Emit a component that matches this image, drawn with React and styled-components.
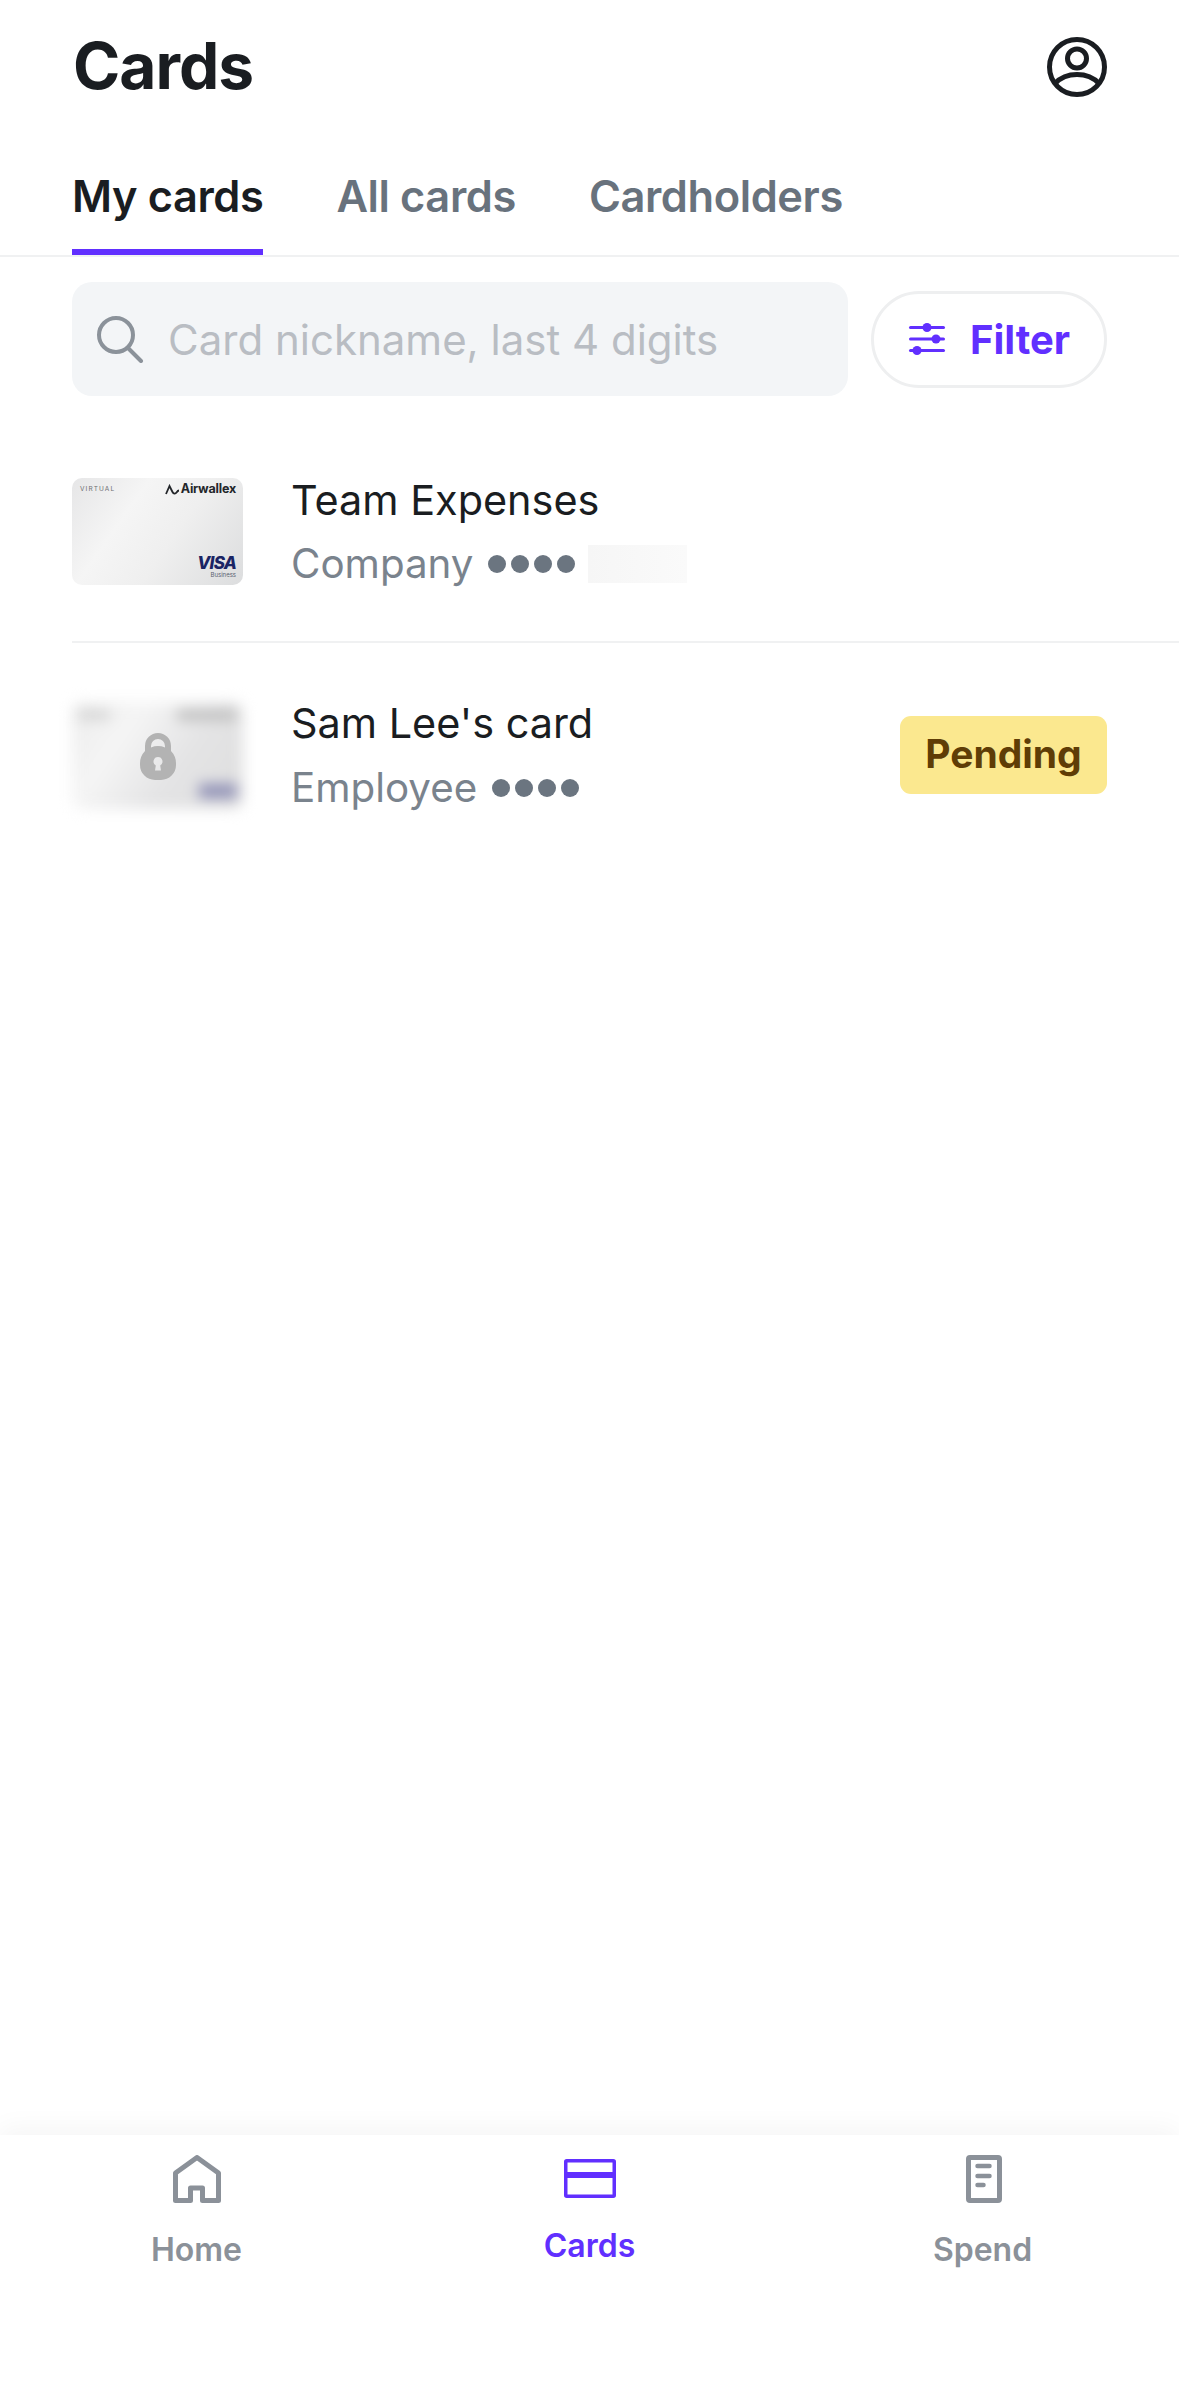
import styled, { createGlobalStyle } from 'styled-components';

const GlobalStyle = createGlobalStyle`
  html, body {
    margin: 0;
    padding: 0;
    background: #fff;
    font-family: 'Inter', 'Liberation Sans', sans-serif;
  }
  * {
    box-sizing: border-box;
  }
`;

const Page = styled.div`
  width: 1179px;
  height: 2396px;
  display: flex;
  flex-direction: column;
  background: #fff;
  color: #1a1d21;
`;

const Main = styled.main`
  flex: 1;
`;

const TitleBar = styled.header`
  height: 132px;
  padding: 36px 72px 0 73px;
  display: flex;
  justify-content: space-between;
  align-items: flex-start;
`;

const Title = styled.h1`
  margin: 0;
  font-size: 64px;
  line-height: 60px;
  font-weight: 700;
  letter-spacing: -1px;
`;

const ProfileIcon = styled.svg`
  display: block;
  margin-top: 1px;
`;

const TabRow = styled.nav`
  height: 125px;
  padding: 0 72px;
  display: flex;
  gap: 73px;
  border-bottom: 2px solid #f0f1f2;
`;

const Tab = styled.div`
  height: 123px;
  padding-top: 38px;
  font-size: 43.4px;
  line-height: 52px;
  font-weight: 600;
  letter-spacing: -0.4px;
  color: ${(props) => (props.$active ? '#1a1d21' : '#68727d')};
  border-bottom: 6px solid ${(props) => (props.$active ? '#612fff' : 'transparent')};
`;

const SearchRow = styled.div`
  padding: 25px 72px 0;
  display: flex;
  align-items: center;
  gap: 23px;
`;

const SearchBox = styled.div`
  flex: 1;
  height: 114px;
  padding-left: 24px;
  display: flex;
  align-items: center;
  gap: 24px;
  background: #f3f5f7;
  border-radius: 20px;
  font-size: 42px;
  color: #b9bdc3;
`;

const FilterButton = styled.button`
  width: 236px;
  height: 97px;
  padding: 0;
  display: flex;
  align-items: center;
  justify-content: center;
  gap: 24px;
  background: #fff;
  border: 3px solid #eeeff0;
  border-radius: 49px;
  font-family: inherit;
  font-size: 40px;
  font-weight: 700;
  color: #612fff;
`;

const Row = styled.div`
  height: ${(props) => props.$height}px;
  padding-top: ${(props) => props.$top}px;
  margin-left: 72px;
  padding-right: 72px;
  display: flex;
  align-items: center;
  gap: 48px;
  border-bottom: ${(props) => (props.$divider ? '2px solid #f0f1f2' : 'none')};
`;

const CardThumb = styled.div`
  flex: none;
  width: 171px;
  height: 107px;
  padding: 5px 7px 6px;
  display: flex;
  flex-direction: column;
  justify-content: space-between;
  border-radius: 10px;
  background: linear-gradient(125deg, #e6e6e7 0%, #f5f5f5 32%, #efefef 58%, #dcddde 100%);
`;

const BlurredFace = styled(CardThumb)`
  padding: 8px 6px 11px;
  filter: blur(7px);
  background: linear-gradient(125deg, #ececec 0%, #f5f5f5 30%, #e4e4e5 62%, #dedede 100%);
`;

const ThumbWrap = styled.div`
  position: relative;
  flex: none;
`;

const LockOver = styled.div`
  position: absolute;
  inset: 0;
  display: flex;
  align-items: center;
  justify-content: center;
`;

const ThumbLine = styled.div`
  display: flex;
  align-items: ${(props) => (props.$end ? 'flex-end' : 'center')};
  justify-content: space-between;
`;

const Virtual = styled.span`
  margin-left: 1px;
  font-size: 6.5px;
  line-height: 10px;
  letter-spacing: 1.1px;
  color: #6d6f72;
`;

const Brand = styled.span`
  display: flex;
  align-items: center;
  gap: 1px;
  font-size: 12.5px;
  line-height: 12px;
  font-weight: 700;
  letter-spacing: -0.2px;
  color: #23262a;
`;

const VisaBlock = styled.span`
  margin-left: auto;
  display: flex;
  flex-direction: column;
  align-items: flex-end;
`;

const Visa = styled.span`
  font-size: 17px;
  line-height: 15px;
  font-weight: 800;
  font-style: italic;
  letter-spacing: -0.8px;
  color: #1a2464;
`;

const Business = styled.span`
  font-size: 6px;
  line-height: 8px;
  color: #5b6070;
`;

const BlurBar = styled.span`
  display: block;
  width: ${(props) => props.$width}px;
  height: ${(props) => props.$height}px;
  background: ${(props) => props.$color};
`;

const RowText = styled.div`
  flex: 1;
  display: flex;
  flex-direction: column;
  gap: ${(props) => props.$gap}px;
`;

const RowTitle = styled.div`
  font-size: 41.4px;
  line-height: 50px;
  color: #1a1d21;
`;

const RowSub = styled.div`
  display: flex;
  align-items: center;
  font-size: 40.3px;
  line-height: 50px;
  color: #7a838d;
`;

const Dots = styled.span`
  margin-left: 15px;
  display: flex;
  gap: 5px;
`;

const Dot = styled.i`
  width: 18px;
  height: 18px;
  border-radius: 50%;
  background: #6b7580;
`;

const Redacted = styled.span`
  width: 99px;
  height: 38px;
  margin-left: 13px;
  background: linear-gradient(90deg, #f6f6f6, #fafafa);
`;

const Badge = styled.div`
  flex: none;
  width: 207px;
  height: 78px;
  padding-bottom: 3px;
  display: flex;
  align-items: center;
  justify-content: center;
  background: #fbe88f;
  border-radius: 11px;
  font-size: 39px;
  font-weight: 700;
  color: #5f3d06;
`;

const TabBar = styled.nav`
  height: 261px;
  display: grid;
  grid-template-columns: repeat(3, 1fr);
  justify-items: center;
  background: #fff;
  box-shadow: 0 -8px 24px rgba(0, 0, 0, 0.04);
`;

const TabItem = styled.div`
  width: 393px;
  padding-top: 20px;
  display: flex;
  flex-direction: column;
  align-items: center;
  gap: ${(props) => (props.$active ? '21px' : '25px')};
  font-size: 32px;
  line-height: 40px;
  font-weight: 600;
  color: ${(props) => (props.$active ? '#612fff' : '#8b9199')};
`;

const NavIcon = styled.svg`
  display: block;
  width: 58px;
  height: 50px;
`;

const Sliders = () => (
  <svg width="38" height="36" viewBox="0 0 38 36" fill="#612fff">
    <rect x="1" y="5" width="36" height="3" rx="1.5" />
    <rect x="1" y="16.5" width="36" height="3" rx="1.5" />
    <rect x="1" y="28" width="36" height="3" rx="1.5" />
    <circle cx="19" cy="6.5" r="4.5" />
    <circle cx="28" cy="18" r="4.5" />
    <circle cx="9" cy="29.5" r="4.5" />
  </svg>
);

const Lock = () => (
  <svg width="36" height="50" viewBox="0 0 36 50" fill="#b3b3b3">
    <path
      fillRule="evenodd"
      d="M5 21V16a13 13 0 0 1 26 0v5a18 18 0 0 1 5 12v2a15 15 0 0 1-15 15h-6a15 15 0 0 1-15-15v-2a18 18 0 0 1 5-12zM11 17.500a18 18 0 0 1 14 0V16a7 7 0 0 0-14 0zM18 27a4.500 4.500 0 0 0-2.200 8.400l-.8 5.100h6l-.8-5.100A4.500 4.500 0 0 0 18 27z"
    />
  </svg>
);

const CardDots = () => (
  <Dots>
    <Dot />
    <Dot />
    <Dot />
    <Dot />
  </Dots>
);

export default function App() {
  return (
    <Page>
      <GlobalStyle />
      <Main>
        <TitleBar>
          <Title>Cards</Title>
          <ProfileIcon width="60" height="60" viewBox="0 0 60 60" fill="none" stroke="#1a1d21" strokeWidth="5">
            <circle cx="30" cy="30" r="27.500" />
            <circle cx="30" cy="21.500" r="9.500" />
            <path d="M8 46.500C14 40 22 37.500 30 37.500S46 40 52 46.500" />
          </ProfileIcon>
        </TitleBar>
        <TabRow>
          <Tab $active>My cards</Tab>
          <Tab>All cards</Tab>
          <Tab>Cardholders</Tab>
        </TabRow>
        <SearchRow>
          <SearchBox>
            <svg width="48" height="48" viewBox="0 0 48 48" fill="none" stroke="#8b929a" strokeWidth="4" strokeLinecap="round">
              <circle cx="20" cy="20" r="17" />
              <path d="M32 33l13 13" />
            </svg>
            Card nickname, last 4 digits
          </SearchBox>
          <FilterButton>
            <Sliders />
            Filter
          </FilterButton>
        </SearchRow>
        <Row $height={247} $top={26} $divider>
          <CardThumb>
            <ThumbLine>
              <Virtual>VIRTUAL</Virtual>
              <Brand>
                <svg width="15" height="11" viewBox="0 0 15 11" fill="none" stroke="#23262a" strokeWidth="1.800">
                  <path d="M1 10l3.500-8 3 6c1 2 3 2 4 .5s1.500-2 2.500-2" />
                </svg>
                Airwallex
              </Brand>
            </ThumbLine>
            <ThumbLine $end>
              <VisaBlock>
                <Visa>VISA</Visa>
                <Business>Business</Business>
              </VisaBlock>
            </ThumbLine>
          </CardThumb>
          <RowText $gap={14}>
            <RowTitle>Team Expenses</RowTitle>
            <RowSub>
              Company
              <CardDots />
              <Redacted />
            </RowSub>
          </RowText>
        </Row>
        <Row $height={200} $top={24}>
          <ThumbWrap>
            <BlurredFace>
              <ThumbLine>
                <BlurBar $width={32} $height={8} $color="#cfcfcf" />
                <BlurBar $width={60} $height={10} $color="#bcbcbc" />
              </ThumbLine>
              <ThumbLine $end>
                <VisaBlock>
                  <BlurBar $width={38} $height={14} $color="#8e8fb5" />
                </VisaBlock>
              </ThumbLine>
            </BlurredFace>
            <LockOver>
              <Lock />
            </LockOver>
          </ThumbWrap>
          <RowText $gap={15}>
            <RowTitle>Sam Lee's card</RowTitle>
            <RowSub>
              Employee
              <CardDots />
            </RowSub>
          </RowText>
          <Badge>Pending</Badge>
        </Row>
      </Main>
      <TabBar>
        <TabItem>
          <NavIcon viewBox="0 0 58 50" fill="none" stroke="#8b9199" strokeWidth="5" strokeLinejoin="round">
            <path d="M7.500 18L29 2.500 50.500 18V45.500H34.500V33H22.500V45.500H7.500z" />
          </NavIcon>
          Home
        </TabItem>
        <TabItem $active>
          <NavIcon viewBox="0 0 58 50">
            <rect x="4.750" y="5.750" width="48.500" height="35.500" rx="1" fill="none" stroke="#612fff" strokeWidth="3.500" />
            <rect x="4.750" y="17" width="48.500" height="6" fill="#612fff" />
          </NavIcon>
          Cards
        </TabItem>
        <TabItem>
          <NavIcon viewBox="0 0 58 50" fill="none" stroke="#8b9199">
            <rect x="14.500" y="2.500" width="31" height="43" rx="1.500" strokeWidth="5" />
            <path d="M23.500 11h12M23.500 21h12M23.500 30h6" strokeWidth="4.500" strokeLinecap="round" />
          </NavIcon>
          Spend
        </TabItem>
      </TabBar>
    </Page>
  );
}
